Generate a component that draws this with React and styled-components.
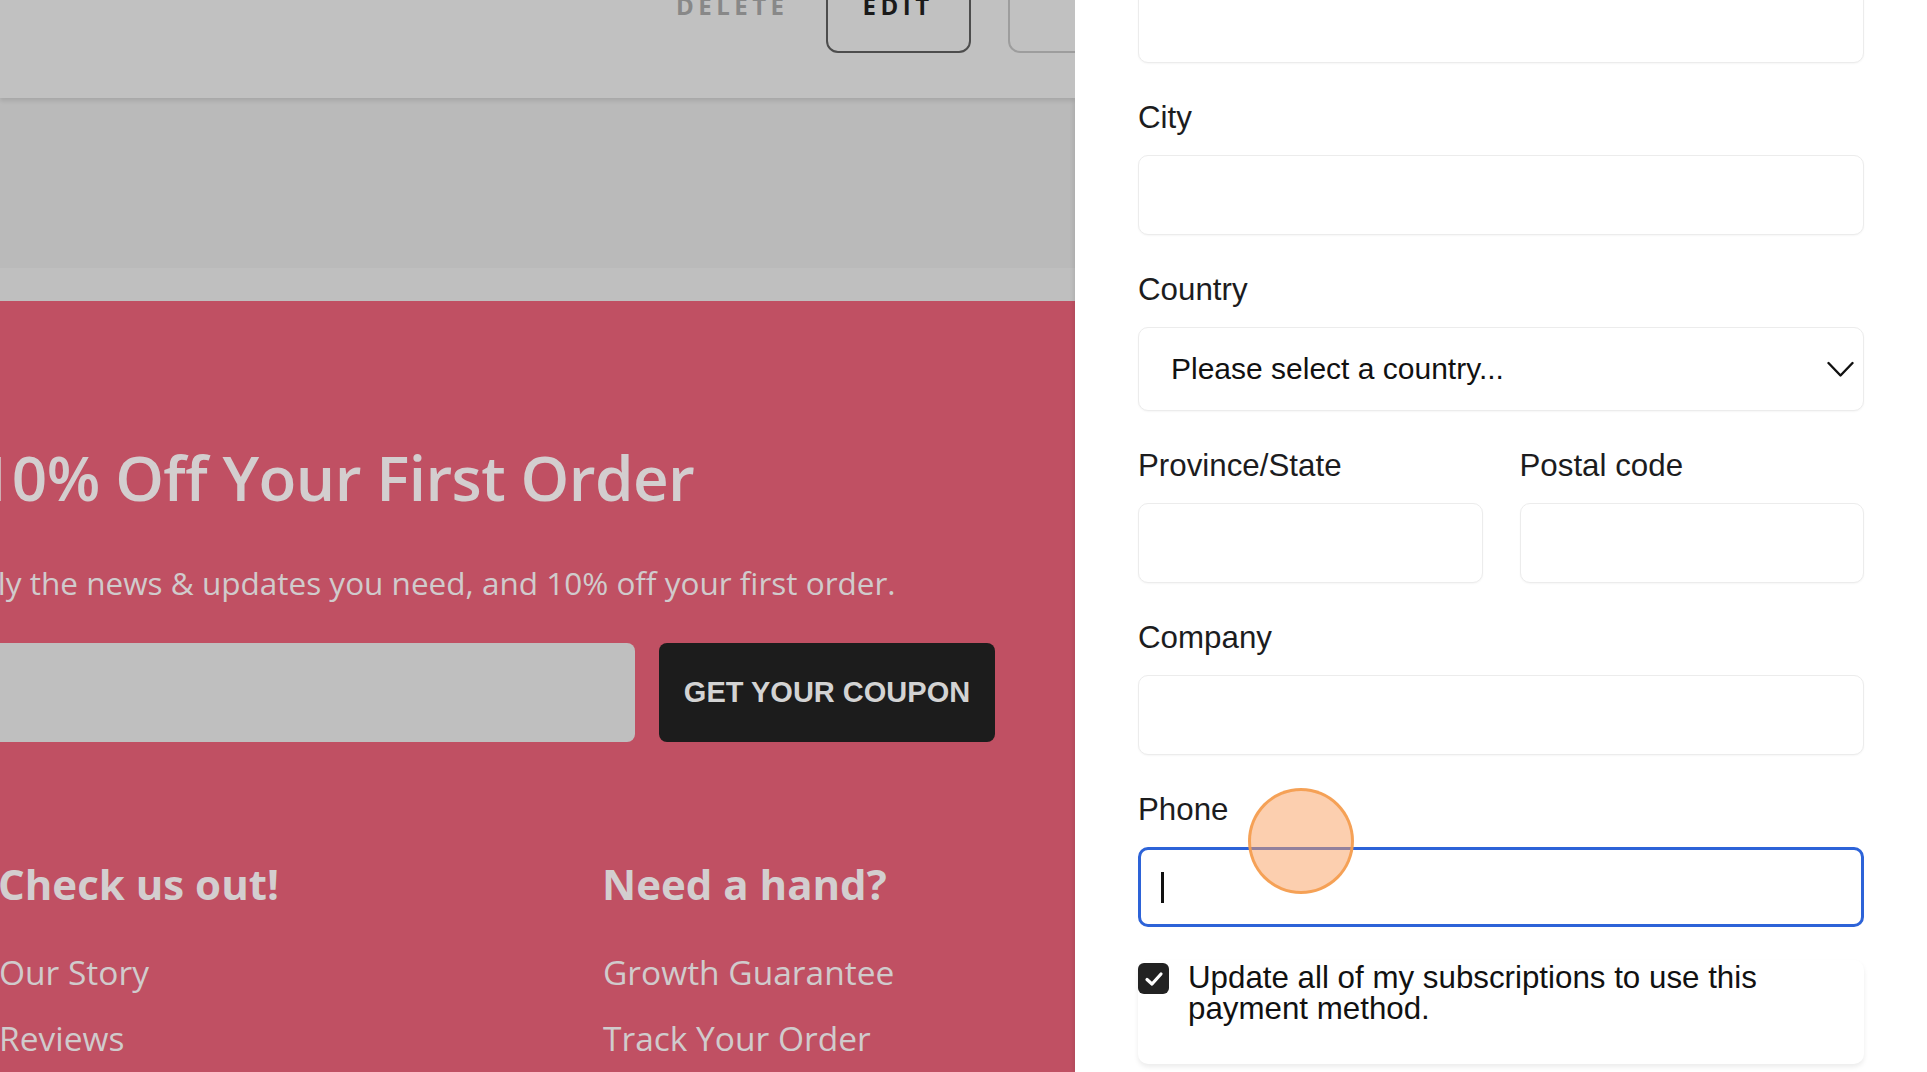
import React from "react";
import styled, { createGlobalStyle } from "styled-components";

const GlobalStyle = createGlobalStyle`
	html,
	body {
		margin: 0;
		padding: 0;
	}

	body {
		overflow: hidden;
		background: #ffffff;
	}

	* {
		box-sizing: border-box;
	}
`;

const Page = styled.div`
	display: flex;
	width: 1927px;
	height: 1072px;
	overflow: hidden;
`;

/* ---------- dimmed storefront on the left ---------- */

const StorePane = styled.div`
	flex: 0 0 1075px;
	display: flex;
	flex-direction: column;
	overflow: hidden;
	background: #bababa;
	font-family: "Open Sans", "Liberation Sans", sans-serif;
`;

const TopBar = styled.div`
	position: relative;
	z-index: 1;
	flex: 0 0 98px;
	display: flex;
	align-items: flex-start;
	padding-left: 676px;
	background: #c1c1c1;
	box-shadow: 0 3px 4px rgba(0, 0, 0, 0.1);
`;

const ActionRow = styled.div`
	display: flex;
	align-items: center;
	gap: 37px;
	height: 96px;
	margin-top: -43px;
`;

const ActionButton = styled.button`
	flex-shrink: 0;
	height: 96px;
	min-width: ${(p) => p.$width || "auto"};
	padding: ${(p) => (p.$bare ? "0" : "0 35px")};
	border: ${(p) =>
		p.$bare ? "none" : `2px solid ${p.$muted ? "#9d9d9d" : "#4d4d4d"}`};
	border-radius: 12px;
	background: transparent;
	color: ${(p) => (p.$bare ? "#888888" : "#1a1a1a")};
	font-family: "Open Sans", sans-serif;
	font-size: 24px;
	font-weight: 700;
	letter-spacing: 4.5px;
`;

const MidBand = styled.div`
	flex: 0 0 170px;
	background: #bababa;
`;

const LightBand = styled.div`
	flex: 0 0 33px;
	background: #bfbfbf;
`;

const Promo = styled.section`
	flex: 1;
	display: flex;
	flex-direction: column;
	padding-top: 139px;
	background: #c05063;
	color: #d3cecf;
	white-space: nowrap;
`;

const PromoTitle = styled.h2`
	margin: 0 0 0 -23px;
	font-size: 62px;
	font-weight: 600;
	line-height: 1.22;
	letter-spacing: -0.6px;
`;

const PromoText = styled.p`
	margin: 46px 0 0 -46px;
	font-size: 31.5px;
	line-height: 1.34;
	color: #d0cbcc;
`;

const SignupRow = styled.div`
	display: flex;
	gap: 24px;
	margin: 39px 0 0 -65px;
`;

const EmailField = styled.div`
	width: 700px;
	height: 99px;
	border-radius: 8px;
	background: #bfbfbf;
`;

const CouponButton = styled.button`
	width: 336px;
	height: 99px;
	border: none;
	border-radius: 8px;
	background: #1c1c1c;
	color: #d3d3d3;
	font-family: "Liberation Sans", Arial, sans-serif;
	font-size: 29px;
	font-weight: 700;
`;

const FooterGrid = styled.div`
	display: grid;
	grid-template-columns: 604px 1fr;
	margin-top: 117px;
`;

const FooterColumn = styled.div`
	display: flex;
	flex-direction: column;
`;

const FooterHeading = styled.h3`
	margin: 0 0 43px -2px;
	font-size: 42px;
	font-weight: 700;
	line-height: 1.2;
`;

const FooterLink = styled.a`
	margin: 0 0 26px -1px;
	font-size: 33.5px;
	line-height: 1.2;
	color: #d0cbcc;
`;

/* ---------- address drawer on the right ---------- */

const Drawer = styled.aside`
	position: relative;
	flex: 1;
	display: flex;
	flex-direction: column;
	gap: 37px;
	padding: 0 63px;
	background: #ffffff;
	box-shadow: -2px 0 4px rgba(0, 0, 0, 0.08);
	font-family: "Liberation Sans", Arial, sans-serif;
	color: #1c1c1e;
`;

const Field = styled.div`
	display: flex;
	flex-direction: column;
`;

const Label = styled.label`
	margin-bottom: 19px;
	font-size: 31.3px;
	line-height: 36px;
`;

const TextBox = styled.div`
	height: ${(p) => p.$height || "80px"};
	margin-top: ${(p) => p.$offset || "0"};
	border: 1.5px solid #ececec;
	border-radius: 10px;
	background: #ffffff;
	box-shadow: 0 1px 2px rgba(0, 0, 0, 0.04);
`;

const SelectBox = styled(TextBox)`
	display: flex;
	align-items: center;
	justify-content: space-between;
	padding: 0 9px 0 32px;
	font-size: 30px;
	color: #111111;
`;

const Pair = styled.div`
	display: grid;
	grid-template-columns: 1fr 1fr;
	gap: 37px;
`;

const FocusedBox = styled.div`
	display: flex;
	align-items: center;
	height: 80px;
	padding-left: 20px;
	border: 3px solid #2d63d8;
	border-radius: 10px;
	background: #ffffff;
`;

const Caret = styled.span`
	width: 2.5px;
	height: 31px;
	background: #111111;
`;

const ConsentCard = styled.div`
	display: flex;
	align-items: flex-start;
	gap: 19px;
	margin-top: -4px;
	padding: 2px 0 40px;
	border-radius: 10px;
	background: #ffffff;
	box-shadow: 0 3px 5px rgba(0, 0, 0, 0.08);
`;

const CheckMark = styled.span`
	flex: 0 0 31px;
	display: flex;
	align-items: center;
	justify-content: center;
	height: 31px;
	margin-top: 1px;
	border-radius: 6px;
	background: #222222;
`;

const ConsentText = styled.span`
	font-size: 31.3px;
	line-height: 31px;
	color: #111111;
`;

const ClickRing = styled.div`
	position: absolute;
	left: 173px;
	top: 788px;
	width: 106px;
	height: 106px;
	border: 3px solid rgba(245, 156, 78, 0.9);
	border-radius: 50%;
	background: rgba(250, 160, 95, 0.5);
	pointer-events: none;
`;

const Chevron = () => (
	<svg width="27" height="17" viewBox="0 0 27 17" fill="none">
		<polyline
			points="1.5,2 13.5,14.5 25.5,2"
			stroke="#111"
			strokeWidth="2.4"
			strokeLinecap="round"
			strokeLinejoin="round"
		/>
	</svg>
);

const Tick = () => (
	<svg width="20" height="16" viewBox="0 0 20 16" fill="none">
		<polyline
			points="3,8.5 8,13 17,3"
			stroke="#fff"
			strokeWidth="3.2"
			strokeLinecap="round"
			strokeLinejoin="round"
		/>
	</svg>
);

const footerColumns = [
	{ title: "Check us out!", links: ["Our Story", "Reviews"] },
	{ title: "Need a hand?", links: ["Growth Guarantee", "Track Your Order"] },
];

const App = () => {
	return (
		<>
			<GlobalStyle />
			<Page>
				<StorePane>
					<TopBar>
						<ActionRow>
							<ActionButton $bare>DELETE</ActionButton>
							<ActionButton>EDIT</ActionButton>
							<ActionButton $muted $width="200px" />
						</ActionRow>
					</TopBar>
					<MidBand />
					<LightBand />
					<Promo>
						<PromoTitle>10% Off Your First Order</PromoTitle>
						<PromoText>
							Only the news &amp; updates you need, and 10% off your first order.
						</PromoText>
						<SignupRow>
							<EmailField />
							<CouponButton>GET YOUR COUPON</CouponButton>
						</SignupRow>
						<FooterGrid>
							{footerColumns.map((col) => (
								<FooterColumn key={col.title}>
									<FooterHeading>{col.title}</FooterHeading>
									{col.links.map((link) => (
										<FooterLink key={link}>{link}</FooterLink>
									))}
								</FooterColumn>
							))}
						</FooterGrid>
					</Promo>
				</StorePane>

				<Drawer>
					<TextBox $offset="-17px" />
					<Field>
						<Label>City</Label>
						<TextBox />
					</Field>
					<Field>
						<Label>Country</Label>
						<SelectBox $height="84px">
							<span>Please select a country...</span>
							<Chevron />
						</SelectBox>
					</Field>
					<Pair>
						<Field>
							<Label>Province/State</Label>
							<TextBox />
						</Field>
						<Field>
							<Label>Postal code</Label>
							<TextBox />
						</Field>
					</Pair>
					<Field>
						<Label>Company</Label>
						<TextBox />
					</Field>
					<Field>
						<Label>Phone</Label>
						<FocusedBox>
							<Caret />
						</FocusedBox>
					</Field>
					<ConsentCard>
						<CheckMark>
							<Tick />
						</CheckMark>
						<ConsentText>
							Update all of my subscriptions to use this payment method.
						</ConsentText>
					</ConsentCard>
					<ClickRing />
				</Drawer>
			</Page>
		</>
	);
};

export default App;
